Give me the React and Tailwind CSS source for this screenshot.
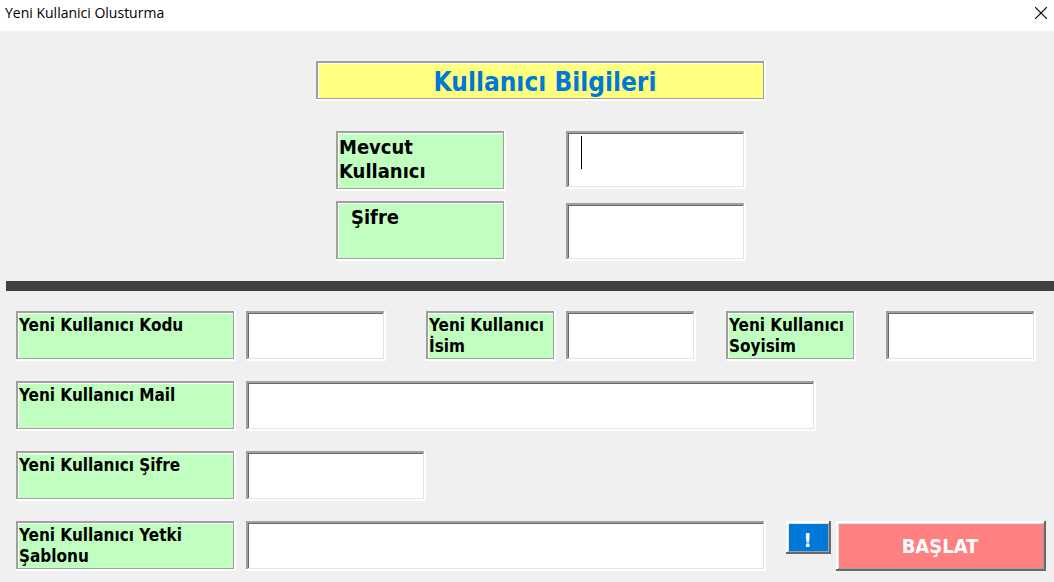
const frame =
  'shadow-[inset_-2px_-2px_0_#fff,inset_2px_2px_0_#a0a0a0,inset_-3px_-3px_0_#a0a0a0,inset_3px_3px_0_#fff]';
const sunken =
  'shadow-[inset_-2px_-2px_0_#fff,inset_2px_2px_0_#a0a0a0,inset_-3px_-3px_0_#e3e3e3,inset_3px_3px_0_#696969]';
const raised =
  'shadow-[inset_-2px_-2px_0_#696969,inset_2px_2px_0_#fff,inset_-3px_-3px_0_#a0a0a0,inset_3px_3px_0_#e3e3e3]';

function Label({ htmlFor, className, children }) {
  return (
    <label htmlFor={htmlFor} className={`block shrink-0 bg-[#c0ffc0] px-[3px] pt-1 font-bold ${frame} ${className}`}>
      {children}
    </label>
  );
}

function Field({ id, type = 'text', className }) {
  return (
    <input
      id={id}
      type={type}
      className={`block min-w-0 rounded-none bg-white pl-4 pr-2 text-xl outline-none ${sunken} ${className}`}
    />
  );
}

const small = 'h-[50px] text-[17px] leading-[21px]';
const large = 'h-[60px] w-[170px] text-xl leading-6';

export default function App() {
  return (
    <div className="min-h-screen bg-[#f0f0f0] font-['DejaVu_Sans_Condensed','DejaVu_Sans',sans-serif] text-black">
      <header className="flex h-[31px] items-center justify-between bg-white pl-[5px] pr-[7px]">
        <h1 className="pb-1.5 font-['Open_Sans',sans-serif] text-sm">Yeni Kullanici Olusturma</h1>
        <button type="button" aria-label="Kapat" className="mb-1.5">
          <svg width="12" height="12" viewBox="0 0 12 12" stroke="#000" strokeWidth="1.2" aria-hidden="true">
            <path d="M0 0 12 12M12 0 0 12" />
          </svg>
        </button>
      </header>

      <form onSubmit={(e) => e.preventDefault()}>
        <section className="flex flex-col items-center pb-5 pl-7 pt-[30px]">
          <h2
            className={`h-10 w-full max-w-[450px] bg-[#ffff80] pl-2 text-center text-[26px] font-bold leading-[42px] text-[#0078d7] ${frame}`}
          >
            Kullanıcı Bilgileri
          </h2>
          <div className="mt-[30px] flex gap-[60px]">
            <Label htmlFor="mevcut" className={large}>
              Mevcut Kullanıcı
            </Label>
            <div className="relative">
              <input
                id="mevcut"
                className={`peer block h-[58px] w-[180px] rounded-none bg-white pl-4 pr-2 text-xl outline-none ${sunken}`}
              />
              <span className="pointer-events-none absolute left-[15px] top-[5px] h-[33px] w-px bg-black peer-focus:hidden" />
            </div>
          </div>
          <div className="mt-[10px] flex items-end gap-[60px]">
            <Label htmlFor="sifre" className={large}>
              <span className="pl-3">Şifre</span>
            </Label>
            <Field id="sifre" type="password" className="h-[58px] w-[180px]" />
          </div>
        </section>

        <hr className="ml-1.5 h-[10px] border-0 bg-[#404040]" />

        <section className="flex flex-col gap-5 pb-[11px] pl-4 pt-5">
          <div className="flex pr-[18px]">
            <Label htmlFor="kod" className={`${small} w-[220px]`}>
              Yeni Kullanıcı Kodu
            </Label>
            <Field id="kod" className="ml-[10px] h-[50px] grow basis-[140px]" />
            <Label htmlFor="isim" className={`${small} ml-10 w-[130px]`}>
              Yeni Kullanıcı İsim
            </Label>
            <Field id="isim" className="ml-[10px] h-[50px] grow basis-[130px]" />
            <Label htmlFor="soyisim" className={`${small} ml-[30px] w-[130px]`}>
              Yeni Kullanıcı Soyisim
            </Label>
            <Field id="soyisim" className="ml-[30px] h-[50px] grow basis-[150px]" />
          </div>
          <div className="flex gap-[10px] pr-[238px]">
            <Label htmlFor="mail" className={`${small} w-[220px]`}>
              Yeni Kullanıcı Mail
            </Label>
            <Field id="mail" type="email" className="h-[50px] flex-1" />
          </div>
          <div className="flex gap-[10px]">
            <Label htmlFor="yeni-sifre" className={`${small} w-[220px]`}>
              Yeni Kullanıcı Şifre
            </Label>
            <Field id="yeni-sifre" type="password" className="h-[50px] w-[180px]" />
          </div>
          <div className="flex items-start pr-2">
            <Label htmlFor="yetki" className={`${small} w-[220px]`}>
              Yeni Kullanıcı Yetki Şablonu
            </Label>
            <Field id="yetki" className="ml-[10px] h-[50px] flex-1" />
            <button
              type="button"
              className={`ml-5 h-[33px] w-[45px] bg-[#0078d7] pr-0.5 pt-1 text-xl font-bold leading-6 text-white ${raised}`}
            >
              !
            </button>
            <button
              type="submit"
              className={`ml-[5px] h-[50px] w-[210px] bg-[#ff8080] pr-0.5 text-xl font-bold text-white ${raised}`}
            >
              BAŞLAT
            </button>
          </div>
        </section>
      </form>
    </div>
  );
}
